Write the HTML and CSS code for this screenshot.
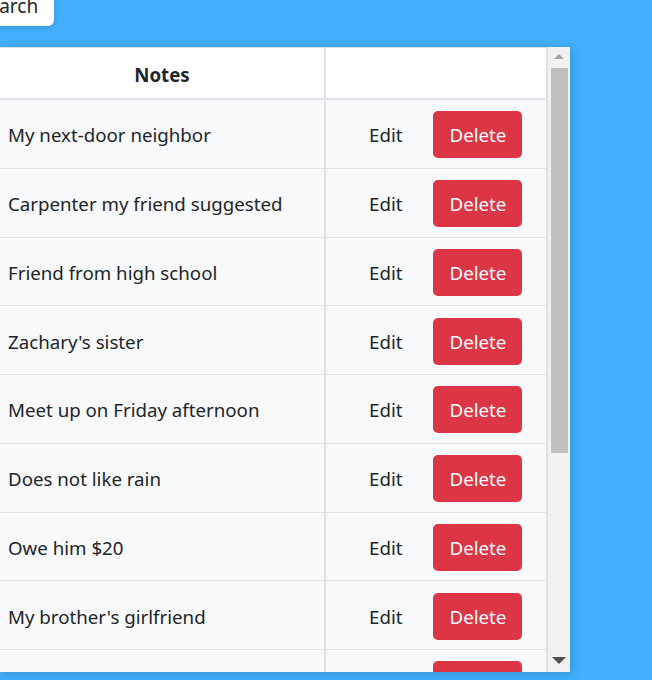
FILE: index.html
```html
<!DOCTYPE html>
<html>
<head>
<meta charset="utf-8">
<link rel="stylesheet" href="styles.css">
</head>
<body>
<div class="topbar">
  <button class="search-btn">Search</button>
</div>
<div class="table-wrap">
  <div class="table-area">
    <table class="notes-table">
      <thead>
        <tr><th class="col-notes">Notes</th><th class="col-actions"></th></tr>
      </thead>
      <tbody>
        <tr><td class="note">My next-door neighbor</td><td class="actions"><div class="act"><button class="btn-edit">Edit</button><button class="btn-delete">Delete</button></div></td></tr>
        <tr><td class="note">Carpenter my friend suggested</td><td class="actions"><div class="act"><button class="btn-edit">Edit</button><button class="btn-delete">Delete</button></div></td></tr>
        <tr><td class="note">Friend from high school</td><td class="actions"><div class="act"><button class="btn-edit">Edit</button><button class="btn-delete">Delete</button></div></td></tr>
        <tr><td class="note">Zachary's sister</td><td class="actions"><div class="act"><button class="btn-edit">Edit</button><button class="btn-delete">Delete</button></div></td></tr>
        <tr><td class="note">Meet up on Friday afternoon</td><td class="actions"><div class="act"><button class="btn-edit">Edit</button><button class="btn-delete">Delete</button></div></td></tr>
        <tr><td class="note">Does not like rain</td><td class="actions"><div class="act"><button class="btn-edit">Edit</button><button class="btn-delete">Delete</button></div></td></tr>
        <tr><td class="note">Owe him $20</td><td class="actions"><div class="act"><button class="btn-edit">Edit</button><button class="btn-delete">Delete</button></div></td></tr>
        <tr><td class="note">My brother's girlfriend</td><td class="actions"><div class="act"><button class="btn-edit">Edit</button><button class="btn-delete">Delete</button></div></td></tr>
        <tr><td class="note">Loves hiking</td><td class="actions"><div class="act"><button class="btn-edit">Edit</button><button class="btn-delete">Delete</button></div></td></tr>
      </tbody>
    </table>
  </div>
  <div class="scrollbar">
    <div class="arrow-up"></div>
    <div class="thumb"></div>
    <div class="track-rest"></div>
    <div class="arrow-down"></div>
  </div>
</div>
</body>
</html>
```
FILE: styles.css
```css
html, body {
  margin: 0;
  padding: 0;
}
body {
  background: #42b0fd;
  font-family: "Noto Sans", "Open Sans", sans-serif;
  color: #212529;
  overflow: hidden;
  width: 652px;
  height: 680px;
}
.topbar {
  display: flex;
  align-items: flex-start;
  height: 47px;
}
.search-btn {
  display: block;
  margin-left: -34px;
  margin-top: -14px;
  height: 40px;
  padding: 0 16px 0 12px;
  font-family: inherit;
  font-size: 19px;
  line-height: 40px;
  color: #212529;
  background: #fff;
  border: none;
  border-radius: 6px;
  box-shadow: 0 2px 6px rgba(0, 0, 0, 0.15);
}
.table-wrap {
  display: flex;
  width: 570px;
  height: 625px;
  background: #fff;
  box-shadow: 2px 2px 10px rgba(0, 0, 0, 0.18);
  overflow: hidden;
}
.table-area {
  width: 548px;
  flex: none;
  overflow: hidden;
}
.notes-table {
  width: 548px;
  border-collapse: collapse;
  table-layout: fixed;
  font-size: 18.7px;
}
.col-notes {
  width: 324px;
}
.notes-table th {
  height: 48px;
  padding: 2px 0 0 0;
  font-weight: 700;
  text-align: center;
  background: #fff;
  border-top: 1px solid #dee2e6;
  border-bottom: 2px solid #dee2e6;
  border-right: 2px solid #dee2e6;
}
.notes-table td {
  height: 65.75px;
  padding: 2px 0 0 0;
  background: #f8f9fa;
  border-bottom: 1px solid #dee2e6;
  border-right: 2px solid #dee2e6;
}
.notes-table td.note {
  padding-left: 8px;
  white-space: nowrap;
}
.act {
  display: flex;
  align-items: center;
  padding-left: 43px;
  gap: 31px;
}
.btn-edit {
  background: none;
  border: none;
  padding: 0;
  font-family: inherit;
  font-size: 18.7px;
  color: #212529;
}
.btn-delete {
  width: 89px;
  height: 47px;
  background: #dc3545;
  color: #fff;
  border: none;
  border-radius: 5px;
  font-family: inherit;
  font-size: 18.7px;
}
.scrollbar {
  width: 22px;
  flex: none;
  background: #f1f1f1;
  display: flex;
  flex-direction: column;
  align-items: center;
}
.arrow-up {
  margin-top: 7px;
  width: 0;
  height: 0;
  border-left: 5px solid transparent;
  border-right: 5px solid transparent;
  border-bottom: 5px solid #a3a3a3;
}
.thumb {
  margin-top: 9px;
  width: 17px;
  height: 385px;
  background: #c1c1c1;
}
.track-rest {
  flex: 1;
}
.arrow-down {
  margin-bottom: 8px;
  width: 0;
  height: 0;
  border-left: 7px solid transparent;
  border-right: 7px solid transparent;
  border-top: 7px solid #505050;
}
```
